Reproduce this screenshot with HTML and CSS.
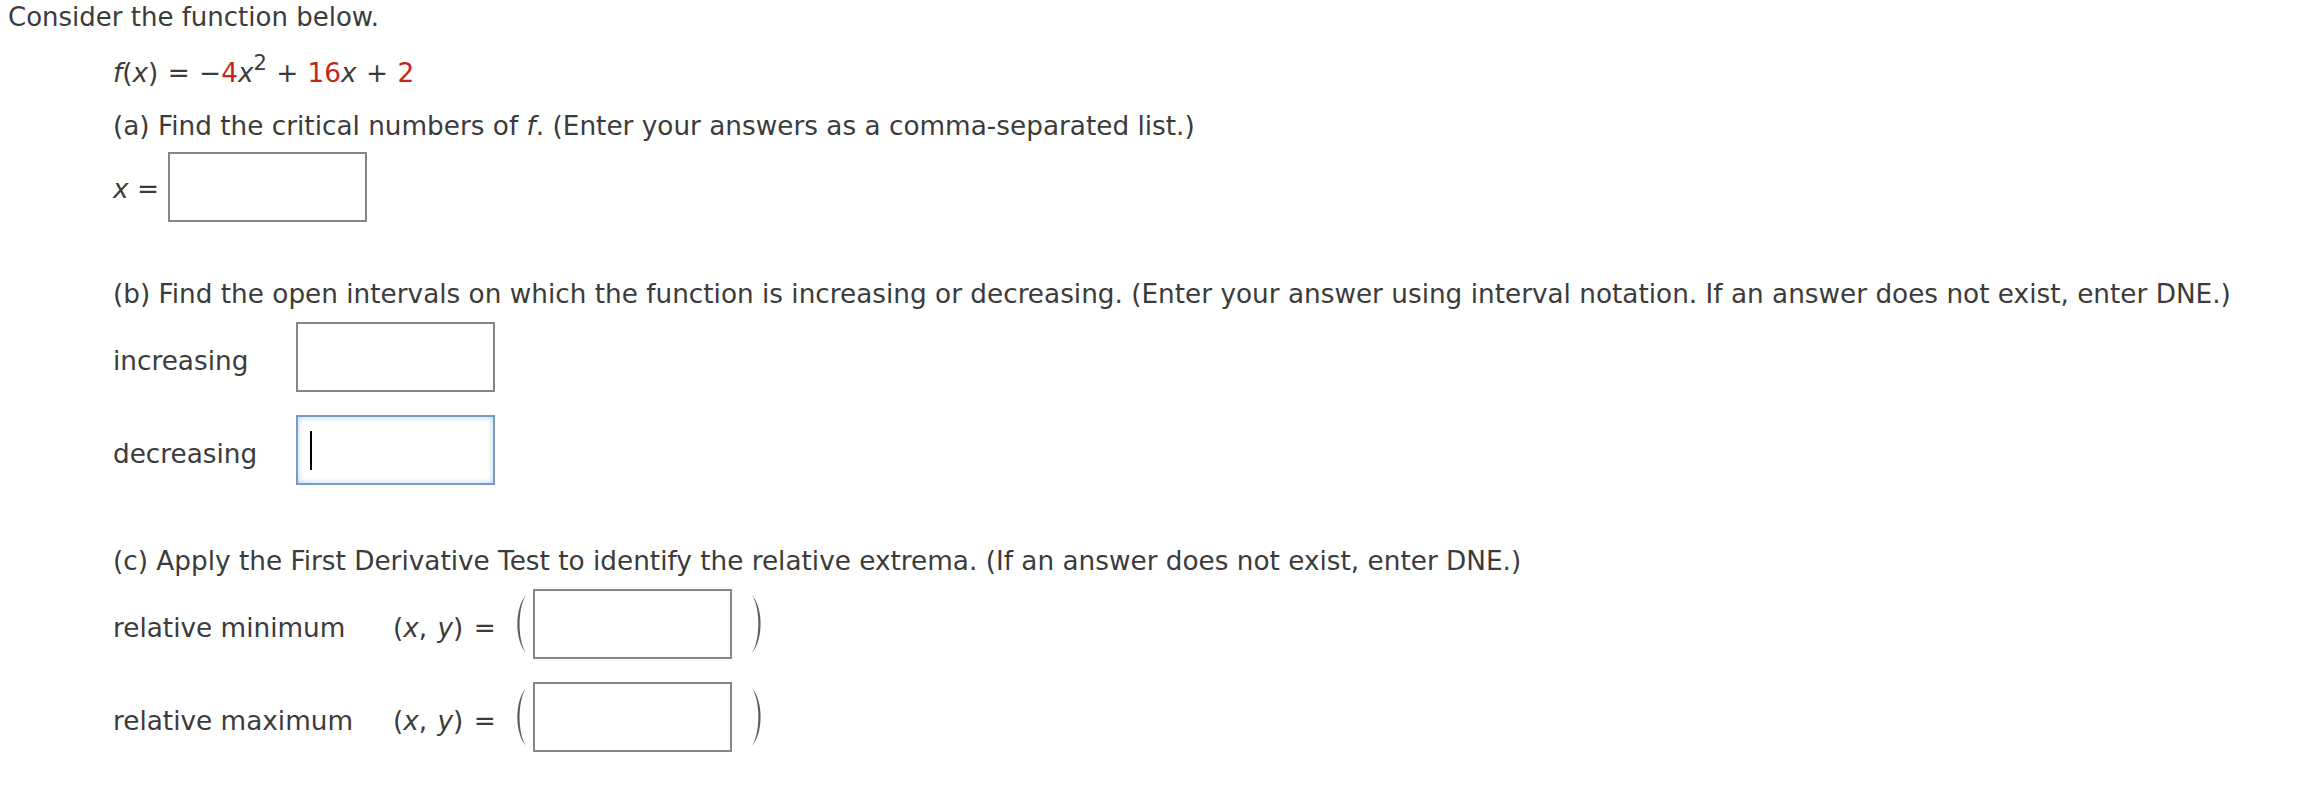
FILE: index.html
```html
<!DOCTYPE html>
<html lang="en">

<head>
  <meta charset="UTF-8" />
  <meta name="viewport" content="width=device-width, initial-scale=1.0" />
  <link rel="stylesheet" href="styles.css">
</head>

<body>
  <div class="question">
    <p class="intro">Consider the function below.</p>

    <div class="body">
      <p class="formula">
        <i>f</i>(<i>x</i>) = &minus;<span class="red">4</span><i>x</i><sup>2</sup> + <span class="red">16</span><i>x</i> + <span class="red">2</span>
      </p>

      <!-- part a -->
      <p class="part part-a">(a) Find the critical numbers of <i>f</i>. (Enter your answers as a comma-separated list.)</p>
      <div class="row row-a">
        <span class="label short"><i>x</i> =</span>
        <span class="answer"></span>
      </div>

      <!-- part b -->
      <p class="part part-b">(b) Find the open intervals on which the function is increasing or decreasing. (Enter your answer using interval notation. If an answer does not exist, enter DNE.)</p>
      <div class="row row-first">
        <span class="label wide">increasing</span>
        <span class="answer"></span>
      </div>
      <div class="row row-next">
        <span class="label wide">decreasing</span>
        <span class="answer focused"><span class="caret"></span></span>
      </div>

      <!-- part c -->
      <p class="part part-c">(c) Apply the First Derivative Test to identify the relative extrema. (If an answer does not exist, enter DNE.)</p>
      <div class="row row-first">
        <span class="label extrema">relative minimum</span>
        <span class="label pair">(<i>x</i>, <i>y</i>) =</span>
        <svg class="paren" width="16" height="60" viewBox="0 0 16 60"><path d="M13 1 C1.5 14, 1.5 46, 13 59 C4.5 46, 4.5 14, 13 1 Z" /></svg>
        <span class="answer"></span>
        <svg class="paren paren-right" width="16" height="60" viewBox="0 0 16 60"><path d="M3 1 C14.5 14, 14.5 46, 3 59 C11.5 46, 11.5 14, 3 1 Z" /></svg>
      </div>
      <div class="row row-next">
        <span class="label extrema">relative maximum</span>
        <span class="label pair">(<i>x</i>, <i>y</i>) =</span>
        <svg class="paren" width="16" height="60" viewBox="0 0 16 60"><path d="M13 1 C1.5 14, 1.5 46, 13 59 C4.5 46, 4.5 14, 13 1 Z" /></svg>
        <span class="answer"></span>
        <svg class="paren paren-right" width="16" height="60" viewBox="0 0 16 60"><path d="M3 1 C14.5 14, 14.5 46, 3 59 C11.5 46, 11.5 14, 3 1 Z" /></svg>
      </div>
    </div>
  </div>
</body>

</html>
```

FILE: styles.css
```css
body {
  margin: 0;
  background-color: #ffffff;
  color: #3b3b3b;
  font-family: "DejaVu Sans", Verdana, sans-serif;
  font-size: 26.3px;
  line-height: 34px;
}

p {
  margin: 0;
}

i {
  font-style: italic;
}

.question {
  padding-left: 8px;
}

.intro {
  height: 34px;
  font-size: 26px;
}

.body {
  padding-left: 105px;
}

.formula {
  margin-top: 22px;
  height: 34px;
  word-spacing: 1px;
}

.formula sup {
  font-size: 0.8em;
  line-height: 0;
  vertical-align: 0.58em;
}

.red {
  color: #c9231d;
}

.part {
  height: 34px;
  white-space: nowrap;
}

.part-a {
  margin-top: 19px;
}

.part-b {
  margin-top: 55px;
}

.part-c {
  margin-top: 59px;
}

.row {
  display: flex;
  align-items: center;
  height: 70px;
}

.row-a {
  margin-top: 9px;
}

.row-first {
  margin-top: 11px;
}

.row-next {
  margin-top: 23px;
}

.row .label {
  padding-top: 8px;
  white-space: nowrap;
}

.label.short {
  width: 55px;
  padding-top: 4px;
}

.label.wide {
  width: 183px;
}

.label.extrema {
  width: 280px;
}

.label.pair {
  width: 120px;
  word-spacing: 2px;
}

.answer {
  box-sizing: border-box;
  display: flex;
  align-items: center;
  width: 199px;
  height: 70px;
  border: 2px solid #868686;
  background-color: #ffffff;
}

.answer.focused {
  border-color: #7a9bc6;
  box-shadow: inset 0 0 6px #bcd3f0;
}

.caret {
  width: 2px;
  height: 39px;
  margin-left: 12px;
  background-color: #000000;
}

.paren {
  margin: 0 4px 0 0;
}

.paren-right {
  margin: 0 0 0 17px;
}

.paren path {
  fill: #5e5e5e;
}
```
